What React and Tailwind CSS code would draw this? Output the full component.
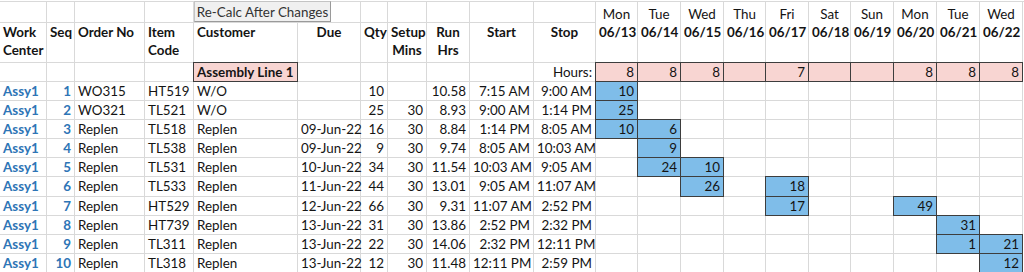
import React from "react";

const DAYS = [
  ["Mon", "06/13"],
  ["Tue", "06/14"],
  ["Wed", "06/15"],
  ["Thu", "06/16"],
  ["Fri", "06/17"],
  ["Sat", "06/18"],
  ["Sun", "06/19"],
  ["Mon", "06/20"],
  ["Tue", "06/21"],
  ["Wed", "06/22"],
];

const HOURS = ["8", "8", "8", "", "7", "", "", "8", "8", "8"];

const ROWS = [
  ["Assy1", "1", "WO315", "HT519", "W/O", "", "10", "", "10.58", "7:15 AM", "9:00 AM", { 0: "10" }],
  ["Assy1", "2", "WO321", "TL521", "W/O", "", "25", "30", "8.93", "9:00 AM", "1:14 PM", { 0: "25" }],
  ["Assy1", "3", "Replen", "TL518", "Replen", "09-Jun-22", "16", "30", "8.84", "1:14 PM", "8:05 AM", { 0: "10", 1: "6" }],
  ["Assy1", "4", "Replen", "TL538", "Replen", "09-Jun-22", "9", "30", "9.74", "8:05 AM", "10:03 AM", { 1: "9" }],
  ["Assy1", "5", "Replen", "TL531", "Replen", "10-Jun-22", "34", "30", "11.54", "10:03 AM", "9:05 AM", { 1: "24", 2: "10" }],
  ["Assy1", "6", "Replen", "TL533", "Replen", "11-Jun-22", "44", "30", "13.01", "9:05 AM", "11:07 AM", { 2: "26", 4: "18" }],
  ["Assy1", "7", "Replen", "HT529", "Replen", "12-Jun-22", "66", "30", "9.31", "11:07 AM", "2:52 PM", { 4: "17", 7: "49" }],
  ["Assy1", "8", "Replen", "HT739", "Replen", "13-Jun-22", "31", "30", "13.86", "2:52 PM", "2:32 PM", { 8: "31" }],
  ["Assy1", "9", "Replen", "TL311", "Replen", "13-Jun-22", "22", "30", "14.06", "2:32 PM", "12:11 PM", { 8: "1", 9: "21" }],
  ["Assy1", "10", "Replen", "TL318", "Replen", "13-Jun-22", "12", "30", "11.48", "12:11 PM", "2:59 PM", { 9: "12" }],
];

const DATA_ALIGN = ["left", "right", "left", "left", "left", "right", "right", "right", "right", "right", "right"];

function Cell({ children, className = "" }) {
  return (
    <div className={"border-r border-b border-[#d9d9d9] px-[3px] leading-[18px] whitespace-nowrap " + className}>
      {children}
    </div>
  );
}

function Boxed({ children, bg, className = "" }) {
  return (
    <div className={"relative border-r border-b border-[#d9d9d9] px-[3px] leading-[18px] whitespace-nowrap " + bg + " " + className}>
      {children}
      <div className="pointer-events-none absolute -left-px -top-px -right-px -bottom-px border border-[#3d3d3d]" />
    </div>
  );
}

const HEADERS = [
  { t: ["Work", "Center"], a: "text-left" },
  { t: ["Seq"], a: "text-left" },
  { t: ["Order No"], a: "text-left" },
  { t: ["Item", "Code"], a: "text-left" },
  { t: ["Customer"], a: "text-left" },
  { t: ["Due"], a: "text-center" },
  { t: ["Qty"], a: "text-center" },
  { t: ["Setup", "Mins"], a: "text-center" },
  { t: ["Run", "Hrs"], a: "text-center" },
  { t: ["Start"], a: "text-center" },
  { t: ["Stop"], a: "text-center" },
];

export default function App() {
  return (
    <div className="h-[272px] w-[1024px] overflow-hidden bg-white pt-px font-['Lato',sans-serif] text-[13.4px] text-[#141414]">
      <div className="grid grid-cols-[47px_28px_70px_49px_104px_63px_27px_39px_43px_64px_62px_42px_43px_43px_42px_43px_42px_43px_43px_43px_43px] grid-rows-[21px_40px_19px_19px_19px_19px_19px_19px_20px_19px_19px_19px_19px] border-t border-[#d9d9d9]">
        {/* Row 1 */}
        {Array.from({ length: 11 }).map((_, i) =>
          i === 4 ? (
            <div key={i} className="relative border-r border-b border-[#d9d9d9]">
              <div className="absolute -top-px left-0 z-10 flex h-[21px] w-[137px] items-center justify-center whitespace-nowrap border border-[#c4c4c4] border-r-[#9a9a9a] border-b-[#9a9a9a] bg-[#f0f0f0] text-[#333] leading-[18px]">
                Re-Calc After Changes
              </div>
            </div>
          ) : (
            <Cell key={i} />
          )
        )}
        {DAYS.map(([d], i) => (
          <div key={"d" + i} className="flex items-end justify-center border-r border-[#d9d9d9] leading-[18px]">
            {d}
          </div>
        ))}

        {/* Row 2: headers */}
        {HEADERS.map((h, i) => (
          <Cell key={"h" + i} className={"font-bold " + h.a}>
            {h.t.map((line, j) => (
              <div key={j}>{line}</div>
            ))}
          </Cell>
        ))}
        {DAYS.map(([, dt], i) => (
          <Cell key={"dt" + i} className="px-0 text-center font-bold">
            {dt}
          </Cell>
        ))}

        {/* Row 3 */}
        {Array.from({ length: 11 }).map((_, i) =>
          i === 4 ? (
            <Boxed key={"r3" + i} bg="bg-[#f8d5d2]" className="font-bold">
              Assembly Line 1
            </Boxed>
          ) : i === 10 ? (
            <Cell key={"r3" + i} className="text-right">
              Hours:
            </Cell>
          ) : (
            <Cell key={"r3" + i} />
          )
        )}
        {HOURS.map((h, i) => (
          <Boxed key={"hr" + i} bg="bg-[#f8d5d2]" className="text-right">
            {h}
          </Boxed>
        ))}

        {/* Data rows */}
        {ROWS.map((row, r) => (
          <React.Fragment key={"row" + r}>
            {row.slice(0, 11).map((v, c) => (
              <Cell
                key={c}
                className={
                  (DATA_ALIGN[c] === "right" ? "text-right " : "text-left ") +
                  (c < 2 ? "font-bold text-[#2e75b6]" : "")
                }
              >
                {v}
              </Cell>
            ))}
            {DAYS.map((_, d) =>
              row[11][d] !== undefined ? (
                <Boxed key={"b" + d} bg="bg-[#7fbde9]" className="text-right">
                  {row[11][d]}
                </Boxed>
              ) : (
                <Cell key={"b" + d} />
              )
            )}
          </React.Fragment>
        ))}
      </div>
    </div>
  );
}
